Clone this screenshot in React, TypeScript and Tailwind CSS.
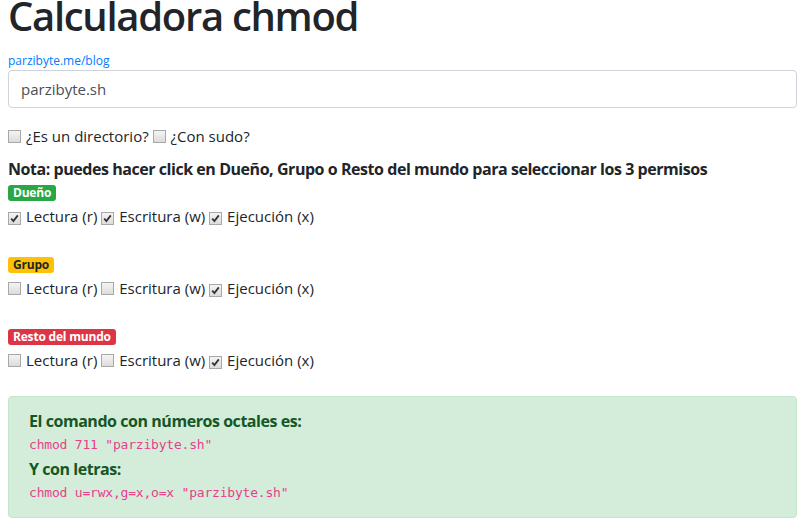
import React from "react";

function Box({ checked }: { checked: boolean }) {
  return (
    <span className="inline-flex w-[13px] h-[13px] border border-[#a8a8a8] bg-gradient-to-b from-[#f4f4f4] to-[#dcdcdc] items-center justify-center align-[-1px] mr-[5px]">
      {checked && (
        <svg width="9" height="9" viewBox="0 0 9 9">
          <path d="M1.2 4.6 L3.4 7 L7.8 1.4" fill="none" stroke="#333" strokeWidth="1.8" />
        </svg>
      )}
    </span>
  );
}

function Perms({ r, w, x }: { r: boolean; w: boolean; x: boolean }) {
  return (
    <div className="h-6 leading-6 text-[15px]">
      <Box checked={r} />Lectura (r) <Box checked={w} />Escritura (w) <Box checked={x} />Ejecución (x)
    </div>
  );
}

function Badge({ label, cls }: { label: string; cls: string }) {
  return (
    <span className={`flex items-center text-[12px] font-bold leading-none px-[5px] h-[16px] rounded-[3px] tracking-[-0.2px] ${cls}`}>
      {label}
    </span>
  );
}

const mono = { fontFamily: "'DejaVu Sans Mono', monospace" };

export default function App() {
  return (
    <div className="px-2 text-[16px] text-[#212529] bg-white" style={{ fontFamily: "'Open Sans', 'Noto Sans', sans-serif" }}>
      <h1 className="text-[40px] leading-[48px] font-semibold -mt-[8px] mb-[12px] tracking-[-1.3px]">Calculadora chmod</h1>
      <a className="block text-[12px] leading-[18px] text-[#007bff]" href="#">parzibyte.me/blog</a>
      <input
        className="w-full h-[38px] border border-[#ced4da] rounded-[4px] px-3 text-[15px] text-[#495057] outline-none"
        defaultValue="parzibyte.sh"
      />
      <div className="h-6 leading-6 mt-4 text-[15px]"><Box checked={false} />¿Es un directorio? <Box checked={false} />¿Con sudo?</div>
      <div className="mt-[9px] font-bold h-6 leading-6 tracking-[-0.45px]">Nota: puedes hacer click en Dueño, Grupo o Resto del mundo para seleccionar los 3 permisos</div>
      <div className="h-[23px] pt-[4px] flex items-start">
        <Badge label="Dueño" cls="bg-[#28a745] text-white" />
      </div>
      <Perms r w x />
      <div className="h-[29px]" />
      <div className="h-[19px] flex items-start">
        <Badge label="Grupo" cls="bg-[#ffc107] text-[#212529]" />
      </div>
      <Perms r={false} w={false} x />
      <div className="h-[29px]" />
      <div className="h-[19px] flex items-start">
        <Badge label="Resto del mundo" cls="bg-[#dc3545] text-white" />
      </div>
      <Perms r={false} w={false} x />
      <div className="mt-[24px] border border-[#c3e6cb] bg-[#d4edda] rounded-[4px] px-5 py-3 text-[#155724]">
        <div className="font-bold h-6 leading-6 tracking-[-0.45px]">El comando con números octales es:</div>
        <div className="h-6 leading-6 text-[13px] tracking-[-0.2px] text-[#e83e8c]" style={mono}>chmod 711 "parzibyte.sh"</div>
        <div className="font-bold h-6 leading-6 tracking-[-0.45px]">Y con letras:</div>
        <div className="h-6 leading-6 text-[13px] tracking-[-0.2px] text-[#e83e8c]" style={mono}>chmod u=rwx,g=x,o=x "parzibyte.sh"</div>
      </div>
    </div>
  );
}
